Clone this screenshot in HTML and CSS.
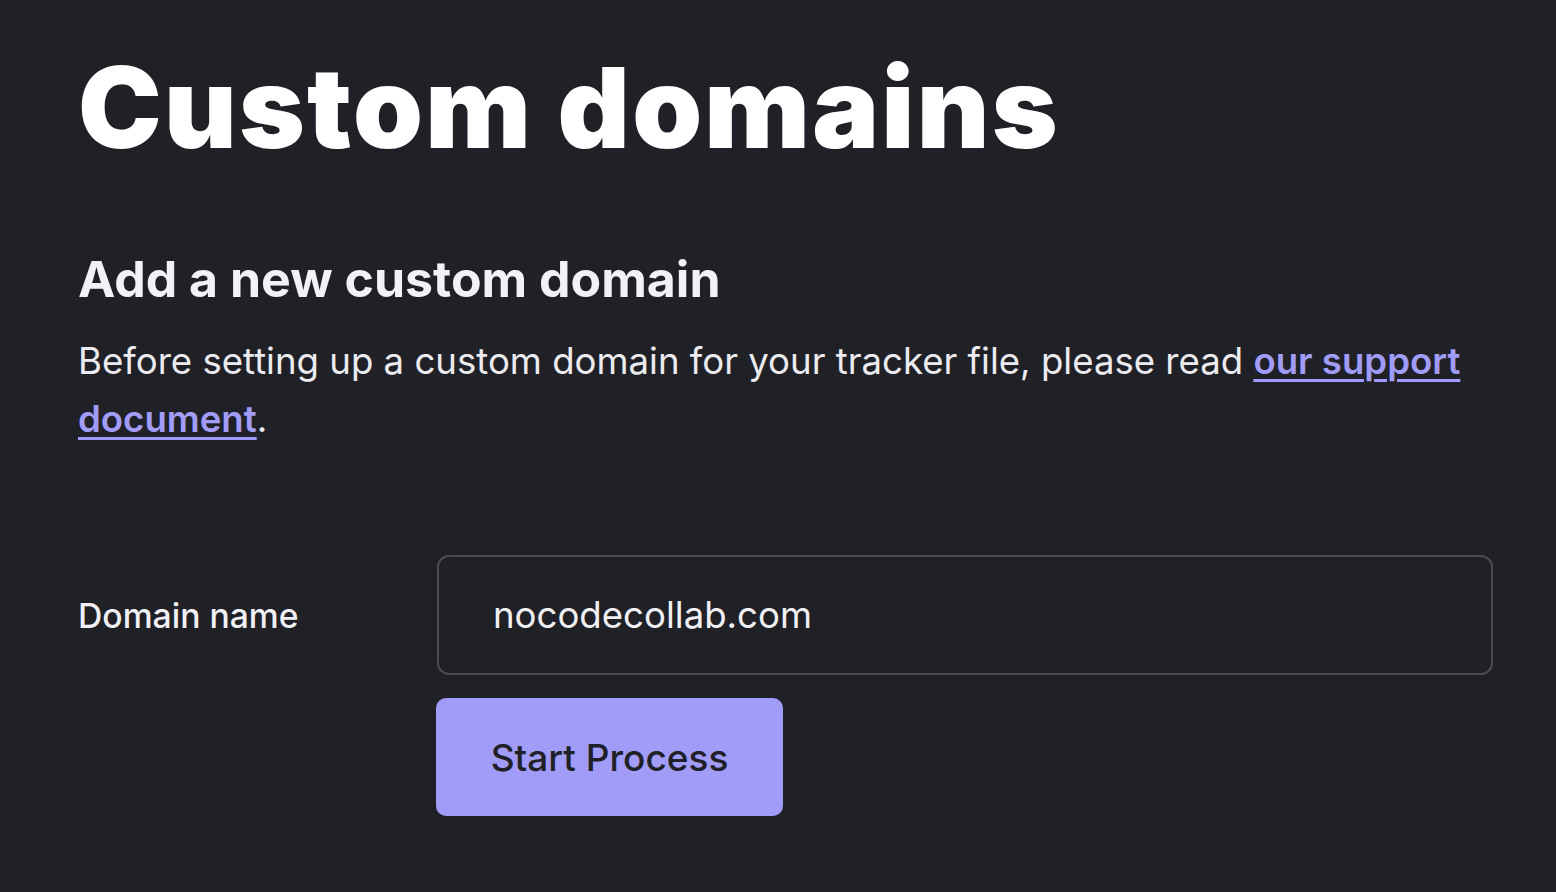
FILE: index.html
```html
<!DOCTYPE html>
<html lang="en">
<head>
<meta charset="utf-8">
<title>Custom domains</title>
<link rel="stylesheet" href="styles.css">
</head>
<body>
<main class="page">
  <h1 class="title">Custom domains</h1>
  <h2 class="subtitle">Add a new custom domain</h2>
  <p class="intro">Before setting up a custom domain for your tracker file, please read <a class="link" href="#">our support document</a>.</p>
  <form class="form">
    <label class="label" for="domain">Domain name</label>
    <input class="input" id="domain" type="text" value="nocodecollab.com">
    <button class="button" type="button">Start Process</button>
  </form>
</main>
</body>
</html>
```

FILE: styles.css
```css
html, body {
  margin: 0;
  padding: 0;
  background: #202127;
}
body {
  font-family: Inter, "Noto Sans", sans-serif;
  color: #f0f0f5;
}
.page {
  padding: 40px 63px 40px 78px;
}
.title {
  margin: 0;
  font-size: 112px;
  line-height: 134px;
  font-weight: 900;
  letter-spacing: 0.02em;
  color: #ffffff;
}
.subtitle {
  margin: 75px 0 0;
  font-size: 50px;
  line-height: 60px;
  font-weight: 700;
  color: #f1f1f6;
}
.intro {
  margin: 24px 0 0;
  font-size: 36.6px;
  line-height: 57.6px;
  font-weight: 400;
  color: #ebebf0;
}
.link {
  color: #a09cf8;
  font-weight: 600;
  text-decoration: underline;
  text-decoration-thickness: 2.5px;
  text-underline-offset: 5px;
}
.form {
  margin-top: 107px;
  display: grid;
  grid-template-columns: 359px 1fr;
  align-items: center;
  row-gap: 23px;
}
.label {
  font-size: 33.7px;
  font-weight: 500;
  color: #f0f0f5;
}
.input {
  box-sizing: border-box;
  height: 120px;
  width: 100%;
  margin: 0;
  padding: 0 54px;
  border: 2px solid #4b4b53;
  border-radius: 12px;
  background: transparent;
  font-family: Inter, "Noto Sans", sans-serif;
  font-size: 36.6px;
  color: #f0f0f5;
  outline: none;
}
.button {
  grid-column: 2;
  justify-self: start;
  width: 347px;
  height: 118px;
  margin: 0 0 0 -1px;
  padding: 0;
  border: none;
  border-radius: 10px;
  background: #a09cf8;
  font-family: Inter, "Noto Sans", sans-serif;
  font-size: 37px;
  font-weight: 500;
  color: #202127;
  cursor: pointer;
}
```
